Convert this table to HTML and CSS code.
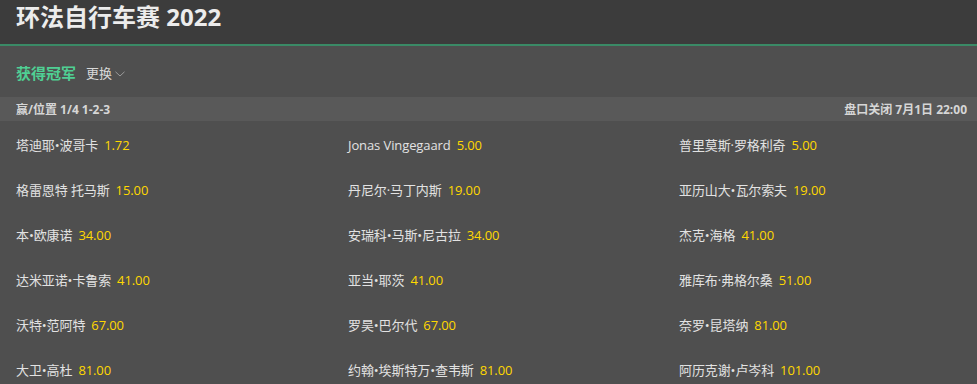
FILE: index.html
```html
<!DOCTYPE html>
<html lang="zh">
<head>
<meta charset="utf-8">
<link rel="stylesheet" href="styles.css">
</head>
<body>
<header class="top">
  <h1 class="title">环法自行车赛 2022</h1>
</header>
<div class="tabs">
  <span class="tab-active">获得冠军</span>
  <span class="tab-change">更换 <svg class="chev" width="10" height="6" viewBox="0 0 10 6"><path d="M0.5 0.8 L5 5 L9.5 0.8" fill="none" stroke="#9a9a9a" stroke-width="1"/></svg></span>
</div>
<div class="bar">
  <span>赢/位置 1/4 1-2-3</span>
  <span>盘口关闭 7月1日 22:00</span>
</div>
<div class="grid">
  <div class="cell"><span class="name">塔迪耶•波哥卡</span><span class="odds">1.72</span></div>
  <div class="cell"><span class="name">Jonas Vingegaard</span><span class="odds">5.00</span></div>
  <div class="cell"><span class="name">普里莫斯·罗格利奇</span><span class="odds">5.00</span></div>
  <div class="cell"><span class="name">格雷恩特 托马斯</span><span class="odds">15.00</span></div>
  <div class="cell"><span class="name">丹尼尔·马丁内斯</span><span class="odds">19.00</span></div>
  <div class="cell"><span class="name">亚历山大•瓦尔索夫</span><span class="odds">19.00</span></div>
  <div class="cell"><span class="name">本•欧康诺</span><span class="odds">34.00</span></div>
  <div class="cell"><span class="name">安瑞科•马斯•尼古拉</span><span class="odds">34.00</span></div>
  <div class="cell"><span class="name">杰克•海格</span><span class="odds">41.00</span></div>
  <div class="cell"><span class="name">达米亚诺•卡鲁索</span><span class="odds">41.00</span></div>
  <div class="cell"><span class="name">亚当•耶茨</span><span class="odds">41.00</span></div>
  <div class="cell"><span class="name">雅库布·弗格尔桑</span><span class="odds">51.00</span></div>
  <div class="cell"><span class="name">沃特•范阿特</span><span class="odds">67.00</span></div>
  <div class="cell"><span class="name">罗昊•巴尔代</span><span class="odds">67.00</span></div>
  <div class="cell"><span class="name">奈罗•昆塔纳</span><span class="odds">81.00</span></div>
  <div class="cell"><span class="name">大卫•高杜</span><span class="odds">81.00</span></div>
  <div class="cell"><span class="name">约翰•埃斯特万•查韦斯</span><span class="odds">81.00</span></div>
  <div class="cell"><span class="name">阿历克谢•卢岑科</span><span class="odds">101.00</span></div>
</div>
</body>
</html>
```
FILE: styles.css
```css
html, body {
  margin: 0;
  padding: 0;
  background: #4f4f4f;
  font-family: "Open Sans", "Noto Sans CJK SC", sans-serif;
  color: #e0e0e0;
  overflow: hidden;
}
.top {
  background: #3c3c3c;
  height: 45px;
  border-bottom: 2px solid #3a8a66;
  padding: 0 16px;
}
.title {
  margin: 0;
  font-size: 24px;
  font-weight: 700;
  color: #ececec;
  line-height: 36px;
  margin-top: -1px;
}
.tabs {
  height: 51px;
  display: flex;
  align-items: center;
  padding: 2px 16px 0;
  box-sizing: border-box;
  gap: 10px;
}
.tab-active {
  color: #4fcf94;
  font-weight: 700;
  font-size: 15px;
}
.tab-change {
  color: #d8d8d8;
  font-size: 13px;
  display: flex;
  align-items: center;
  gap: 3px;
}
.chev { margin-top: 2px; }
.bar {
  background: #595959;
  height: 24px;
  display: flex;
  align-items: center;
  justify-content: space-between;
  padding: 0 10px 0 16px;
  font-size: 12px;
  font-weight: 700;
  color: #d6d6d6;
}
.grid {
  display: grid;
  grid-template-columns: 332px 331px 1fr;
  padding: 1px 0 0 16px;
}
.cell {
  height: 45px;
  display: flex;
  align-items: center;
  font-size: 13px;
  color: #e2e2e2;
  gap: 6px;
  letter-spacing: -0.1px;
}
.odds {
  color: #ffd800;
}
```
